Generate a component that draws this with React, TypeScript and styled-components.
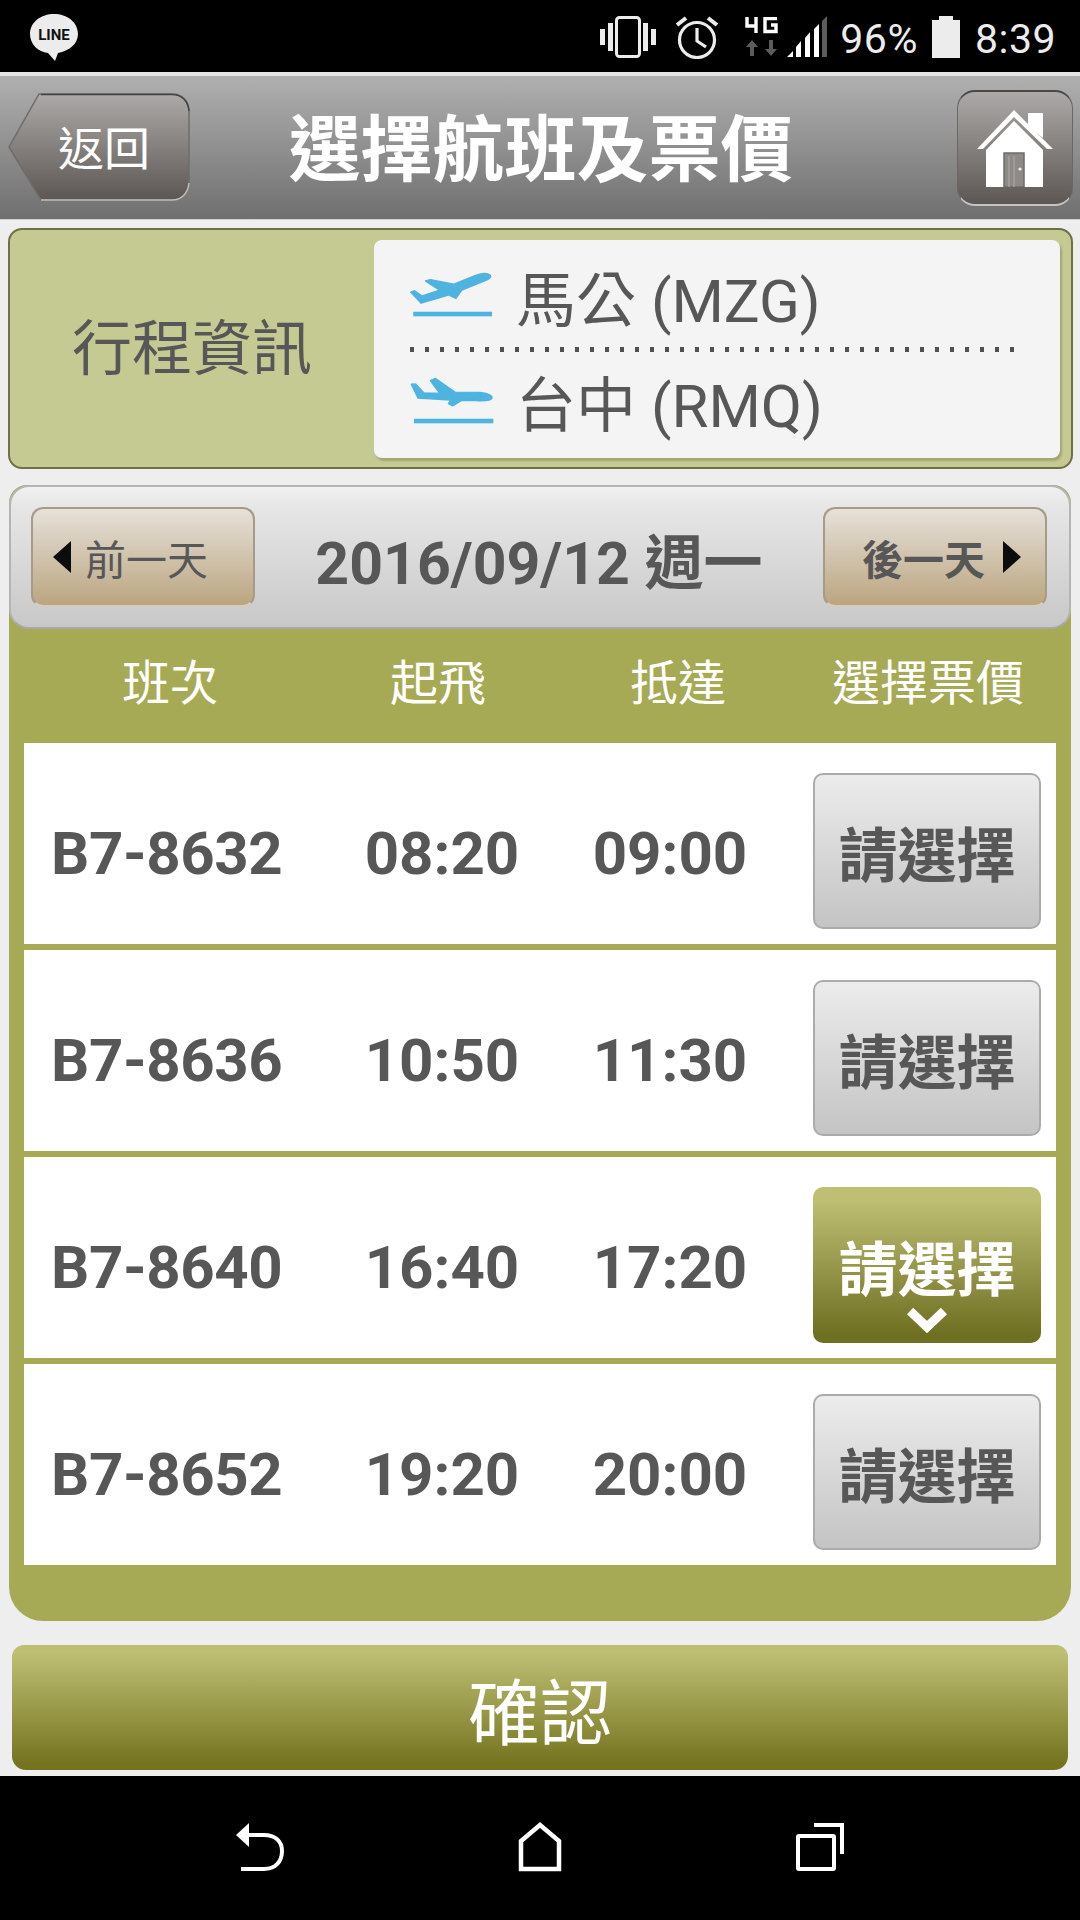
import React from 'react'
import styled, { createGlobalStyle } from 'styled-components'

const GlobalStyle = createGlobalStyle`
  html, body {
    margin: 0;
    padding: 0;
    background: #000;
  }
  * {
    box-sizing: border-box;
  }
`

const Screen = styled.div`
  width: 1080px;
  height: 1920px;
  display: flex;
  flex-direction: column;
  background: #eeeeee;
  color: #575757;
  font-family: Roboto, 'Noto Sans CJK TC', sans-serif;
  overflow: hidden;
`

const StatusBar = styled.div`
  height: 72px;
  flex-shrink: 0;
  display: flex;
  align-items: center;
  padding: 2px 24px 0 30px;
  background: #000;
  color: #ececec;
`

const StatusRight = styled.div`
  margin-left: auto;
  display: flex;
  align-items: center;
`

const StatusGap = styled.span<{ $w: number }>`
  width: ${({ $w }) => $w}px;
`

const StatusText = styled.span`
  padding-top: 4px;
  font-size: 41px;
  line-height: 68px;
  letter-spacing: 0.5px;
`

const TopBar = styled.div`
  height: 148px;
  flex-shrink: 0;
  display: grid;
  grid-template-columns: 1fr auto 1fr;
  align-items: center;
  padding: 0 7px 0 8px;
  border-top: 4px solid #e4e4e4;
  border-bottom: 1px solid #d0d0d0;
  background: linear-gradient(#b0b0b0, #6f6f6f);
`

const BackButton = styled.div`
  position: relative;
  width: 182px;
  height: 108px;
  margin-top: -2px;
  display: flex;
  align-items: center;
  justify-content: center;
  padding: 0 0 4px 10px;
  color: #fff;
  font-size: 46px;
`

const BackShape = styled.svg`
  position: absolute;
  left: 0;
  top: 0;
`

const BackLabel = styled.span`
  position: relative;
`

const Title = styled.h1`
  margin: 6px 0 0;
  color: #fff;
  font-size: 72px;
  font-weight: 700;
  line-height: 1;
`

const HomeButton = styled.div`
  justify-self: end;
  width: 116px;
  height: 116px;
  display: flex;
  align-items: center;
  justify-content: center;
  border-radius: 18px;
  border-top: 2px solid #4a4745;
  border-left: 1px solid #6a6765;
  border-right: 1px solid #6a6765;
  border-bottom: 2px solid #c4c4c4;
  background: linear-gradient(#aca9a8, #5c5753);
`

const InfoPanel = styled.div`
  height: 241px;
  margin: 8px 7px 0 8px;
  flex-shrink: 0;
  display: flex;
  align-items: center;
  padding-right: 11px;
  border: 2px solid #6f7045;
  border-radius: 14px;
  background: #c5c992;
`

const InfoLabel = styled.div`
  width: 364px;
  padding-top: 2px;
  text-align: center;
  font-size: 60px;
  line-height: 1;
`

const RouteCard = styled.div`
  flex: 1;
  height: 218px;
  display: flex;
  flex-direction: column;
  padding: 0 36px;
  border-radius: 8px;
  background: #f4f4f4;
  box-shadow: 2px 3px 2px #a3a675;
`

const RouteRow = styled.div<{ $top: number; $bottom: number; $height: number }>`
  height: ${({ $height }) => $height}px;
  display: flex;
  align-items: center;
  gap: 22px;
  padding: ${({ $top, $bottom }) => `${$top}px 0 ${$bottom}px`};
  font-size: 60px;
  white-space: nowrap;
`

const DottedLine = styled.div`
  height: 5px;
  flex-shrink: 0;
  background-image: linear-gradient(to right, #505050 4px, transparent 4px);
  background-size: 15px 5px;
`

const FlightPanel = styled.div`
  margin: 16px 9px 0;
  height: 1136px;
  flex-shrink: 0;
  display: flex;
  flex-direction: column;
  border-radius: 18px 18px 34px 34px;
  background: #a6aa55;
`

const DateBar = styled.div`
  height: 144px;
  flex-shrink: 0;
  display: flex;
  align-items: center;
  justify-content: space-between;
  padding: 0 22px 0 20px;
  border: 2px solid #b4b4b4;
  border-bottom: 2px solid #a8a8a8;
  border-radius: 20px;
  background: linear-gradient(#f0f0f0 0%, #e6e6e6 15%, #c8c8c8 100%);
`

const DayButton = styled.div<{ $bold?: boolean }>`
  width: 224px;
  height: 100px;
  display: flex;
  align-items: center;
  gap: ${({ $bold }) => ($bold ? 18 : 14)}px;
  padding-left: ${({ $bold }) => ($bold ? 37 : 20)}px;
  border: 2px solid #a69a88;
  border-bottom-color: #d6ccbc;
  border-radius: 12px;
  background: linear-gradient(#e6e1d9, #bba580);
  font-size: 41px;
  font-weight: ${({ $bold }) => ($bold ? 700 : 400)};
`

const DateText = styled.div`
  margin-top: 12px;
  font-size: 59px;
  font-weight: 700;
  line-height: 1;
  white-space: nowrap;
`

const HeadRow = styled.div`
  height: 114px;
  flex-shrink: 0;
  display: grid;
  grid-template-columns: 292px 244px 236px 264px;
  align-items: center;
  padding: 0 11px 14px 15px;
  color: #fff;
  font-size: 48px;
  text-align: center;
`

const FlightList = styled.div`
  display: flex;
  flex-direction: column;
  gap: 6px;
  padding: 0 15px;
`

const FlightRow = styled.div`
  height: 201px;
  display: grid;
  grid-template-columns: 300px 236px 220px 1fr;
  align-items: center;
  padding-top: 20px;
  background: #fff;
  font-size: 60px;
  font-weight: 700;
`

const FlightCode = styled.div`
  padding-left: 27px;
  letter-spacing: -0.4px;
  white-space: nowrap;
`

const FlightTime = styled.div`
  text-align: center;
`

const PickCell = styled.div`
  align-self: start;
  display: flex;
  justify-content: flex-end;
  margin-top: 10px;
  padding-right: 15px;
`

const PickButton = styled.div<{ $active?: boolean }>`
  position: relative;
  width: 228px;
  height: 156px;
  display: flex;
  align-items: center;
  justify-content: center;
  border-radius: 10px;
  border: ${({ $active }) => ($active ? 'none' : '2px solid #ababab')};
  background: ${({ $active }) =>
    $active ? 'linear-gradient(#bfbf74 8%, #6f6f22 95%)' : 'linear-gradient(#ececec, #c4c4c4)'};
  color: ${({ $active }) => ($active ? '#fff' : '#575757')};
  font-size: 59px;
  font-weight: 700;
`

const PickChevron = styled.svg`
  position: absolute;
  left: 94px;
  bottom: 9px;
`

const ConfirmButton = styled.div`
  height: 125px;
  margin: 24px 12px 0;
  flex-shrink: 0;
  display: flex;
  align-items: center;
  justify-content: center;
  border-radius: 12px 12px 14px 14px;
  background: linear-gradient(#bfbf74 6%, #74741f 95%);
  color: #fff;
  font-size: 72px;
`

const NavBar = styled.div`
  margin-top: 6px;
  flex: 1;
  display: grid;
  grid-template-columns: repeat(3, 52px);
  justify-content: center;
  column-gap: 228px;
  padding-top: 46px;
  background: #000;
`

const LineBadge = () => (
  <svg width="48" height="48" viewBox="0 0 48 48">
    <path d="M24 1C11 1 0 9 0 21c0 10 8 18 18 19l7 8 3-8c11-2 20-9 20-19C48 9 37 1 24 1z" fill="#ececec" />
    <text x="24" y="27" textAnchor="middle" fontSize="15" fontWeight="700" fill="#111" fontFamily="Roboto, sans-serif">
      LINE
    </text>
  </svg>
)

const VibrateIcon = () => (
  <svg width="56" height="42" viewBox="0 0 56 42" fill="#ececec">
    <rect x="0" y="13" width="5" height="16" />
    <rect x="8" y="7" width="5" height="28" />
    <rect x="43" y="7" width="5" height="28" />
    <rect x="51" y="13" width="5" height="16" />
    <rect x="16.5" y="1.5" width="23" height="39" rx="3" fill="none" stroke="#ececec" strokeWidth="3" />
  </svg>
)

const AlarmIcon = () => (
  <svg width="44" height="44" viewBox="0 0 44 44" fill="none" stroke="#ececec" strokeWidth="3.2">
    <circle cx="22" cy="25" r="17.5" />
    <path d="M22 13v13l9 6" />
    <path d="M2 10l9-7M42 10l-9-7" strokeWidth="4" />
  </svg>
)

const NetworkIcon = () => (
  <svg width="34" height="40" viewBox="0 0 34 40">
    <path d="M2 0v9h9M11 0v16" fill="none" stroke="#fff" strokeWidth="3.4" />
    <path d="M32 1.5H20v13h11V8h-5" fill="none" stroke="#fff" strokeWidth="3.4" />
    <path d="M7 23l6 7H9v9H5v-9H1zM26 39l6-7h-4v-9h-4v9h-4z" fill="#5c5c5c" />
  </svg>
)

const SignalIcon = () => (
  <svg width="40" height="42" viewBox="0 0 40 42">
    <path d="M0 41l6-6v6zM9 41V31l5-6v16zM18 41V22l5-6v25zM27 41V13l5-5v33z" fill="#fff" />
    <path d="M35 41V5l5-5v41z" fill="#5c5c5c" />
  </svg>
)

const BatteryIcon = () => (
  <svg width="28" height="42" viewBox="0 0 28 42">
    <path d="M7 0h14v4h7v38H0V4h7z" fill="#ececec" />
  </svg>
)

const BackShapeIcon = () => (
  <BackShape width="182" height="108" viewBox="0 0 182 108">
    <defs>
      <linearGradient id="backFill" x1="0" y1="0" x2="0" y2="1">
        <stop offset="0" stopColor="#aca9a8" />
        <stop offset="1" stopColor="#5c5753" />
      </linearGradient>
    </defs>
    <path
      d="M31 1H164C174 1 181 8 181 18V90C181 100 174 107 164 107H33L1 54Z"
      fill="url(#backFill)"
      stroke="#6f6c6a"
      strokeWidth="1.5"
    />
    <path d="M33 1.5H164C174 1.5 180 8 181 18" fill="none" stroke="#444" strokeWidth="1.5" />
    <path d="M33 107H164C174 107 180 100 181 90" fill="none" stroke="#c0c0c0" strokeWidth="1.5" />
  </BackShape>
)

const HomeIcon = () => (
  <svg width="78" height="78" viewBox="0 0 78 78">
    <path d="M52 4h15v25L52 17z" fill="#fff" />
    <path d="M1 40L38 1l39 39h-6L38 8 7 40z" fill="#fff" />
    <path d="M10 41L38 12l29 29v37H10z" fill="#fff" />
    <rect x="28" y="44" width="20" height="34" fill="#8d8a88" stroke="#6e6b69" strokeWidth="1.5" />
    <path d="M33 47v31M38 47v31" stroke="#a4a1a0" strokeWidth="1.5" />
    <circle cx="44" cy="60" r="1.6" fill="#eee" />
  </svg>
)

const TakeoffIcon = () => (
  <svg width="84" height="50" viewBox="88 90 256 150">
    <path
      d="M332 104C322 96 300 100 280 108L222 132 150 118 135 122 178 150 125 168 102 152 90 156 122 190 205 165 228 175 246 150 325 118C332 114 336 110 332 104Z"
      fill="#4fb3e0"
      stroke="#4fb3e0"
      strokeWidth="4"
      strokeLinejoin="round"
    />
    <rect x="98" y="216" width="240" height="14" fill="#4fb3e0" />
  </svg>
)

const LandingIcon = () => (
  <svg width="84" height="50" viewBox="88 412 256 150">
    <path
      d="M92 436L105 435 130 462 178 463 150 425 165 418 225 460 300 461C325 463 340 470 338 478 335 486 320 488 290 486L245 485 218 502 205 495 212 484 112 478Z"
      fill="#4fb3e0"
      stroke="#4fb3e0"
      strokeWidth="4"
      strokeLinejoin="round"
    />
    <rect x="100" y="541" width="242" height="14" fill="#4fb3e0" />
  </svg>
)

const Triangle = ({ left }: { left?: boolean }) => (
  <svg width="18" height="32" viewBox="0 0 18 32">
    <path d={left ? 'M18 0v32L0 16z' : 'M0 0v32l18-16z'} fill="#0c0c0c" />
  </svg>
)

const Chevron = () => (
  <PickChevron width="40" height="28" viewBox="0 0 40 28">
    <path d="M3 5l17 16L37 5" fill="none" stroke="#fff" strokeWidth="9" />
  </PickChevron>
)

const NavBack = () => (
  <svg width="52" height="50" viewBox="0 0 52 50" fill="none" stroke="#fff" strokeWidth="4">
    <path d="M15 1L2 13l13 12z" fill="#fff" stroke="none" />
    <path d="M12 13h18c11 0 18 6 18 16 0 11-7 18-18 18H7" />
  </svg>
)

const NavHome = () => (
  <svg width="52" height="50" viewBox="0 0 52 50" fill="none" stroke="#fff" strokeWidth="4.5">
    <path d="M26 3L7 19v28h38V19z" />
  </svg>
)

const NavRecents = () => (
  <svg width="52" height="50" viewBox="0 0 52 50" fill="none" stroke="#fff" strokeWidth="4">
    <rect x="4" y="14" width="36" height="33" rx="1" />
    <path d="M20 3h28v29" />
  </svg>
)

const FLIGHTS = [
  { code: 'B7-8632', depart: '08:20', arrive: '09:00' },
  { code: 'B7-8636', depart: '10:50', arrive: '11:30' },
  { code: 'B7-8640', depart: '16:40', arrive: '17:20', active: true },
  { code: 'B7-8652', depart: '19:20', arrive: '20:00' }
]

export default function App() {
  return (
    <Screen>
      <GlobalStyle />
      <StatusBar>
        <LineBadge />
        <StatusRight>
          <VibrateIcon />
          <StatusGap $w={19} />
          <AlarmIcon />
          <StatusGap $w={26} />
          <NetworkIcon />
          <StatusGap $w={8} />
          <SignalIcon />
          <StatusGap $w={13} />
          <StatusText>96%</StatusText>
          <StatusGap $w={14} />
          <BatteryIcon />
          <StatusGap $w={15} />
          <StatusText>8:39</StatusText>
        </StatusRight>
      </StatusBar>

      <TopBar>
        <BackButton>
          <BackShapeIcon />
          <BackLabel>返回</BackLabel>
        </BackButton>
        <Title>選擇航班及票價</Title>
        <HomeButton>
          <HomeIcon />
        </HomeButton>
      </TopBar>

      <InfoPanel>
        <InfoLabel>行程資訊</InfoLabel>
        <RouteCard>
          <RouteRow $height={107} $top={4} $bottom={0}>
            <TakeoffIcon />
            <span>馬公 (MZG)</span>
          </RouteRow>
          <DottedLine />
          <RouteRow $height={106} $top={0} $bottom={8}>
            <LandingIcon />
            <span>台中 (RMQ)</span>
          </RouteRow>
        </RouteCard>
      </InfoPanel>

      <FlightPanel>
        <DateBar>
          <DayButton>
            <Triangle left />
            <span>前一天</span>
          </DayButton>
          <DateText>2016/09/12 週一</DateText>
          <DayButton $bold>
            <span>後一天</span>
            <Triangle />
          </DayButton>
        </DateBar>

        <HeadRow>
          <div>班次</div>
          <div>起飛</div>
          <div>抵達</div>
          <div>選擇票價</div>
        </HeadRow>

        <FlightList>
          {FLIGHTS.map(flight => (
            <FlightRow key={flight.code}>
              <FlightCode>{flight.code}</FlightCode>
              <FlightTime>{flight.depart}</FlightTime>
              <FlightTime>{flight.arrive}</FlightTime>
              <PickCell>
                <PickButton $active={flight.active}>
                  請選擇
                  {flight.active && <Chevron />}
                </PickButton>
              </PickCell>
            </FlightRow>
          ))}
        </FlightList>
      </FlightPanel>

      <ConfirmButton>確認</ConfirmButton>

      <NavBar>
        <NavBack />
        <NavHome />
        <NavRecents />
      </NavBar>
    </Screen>
  )
}
